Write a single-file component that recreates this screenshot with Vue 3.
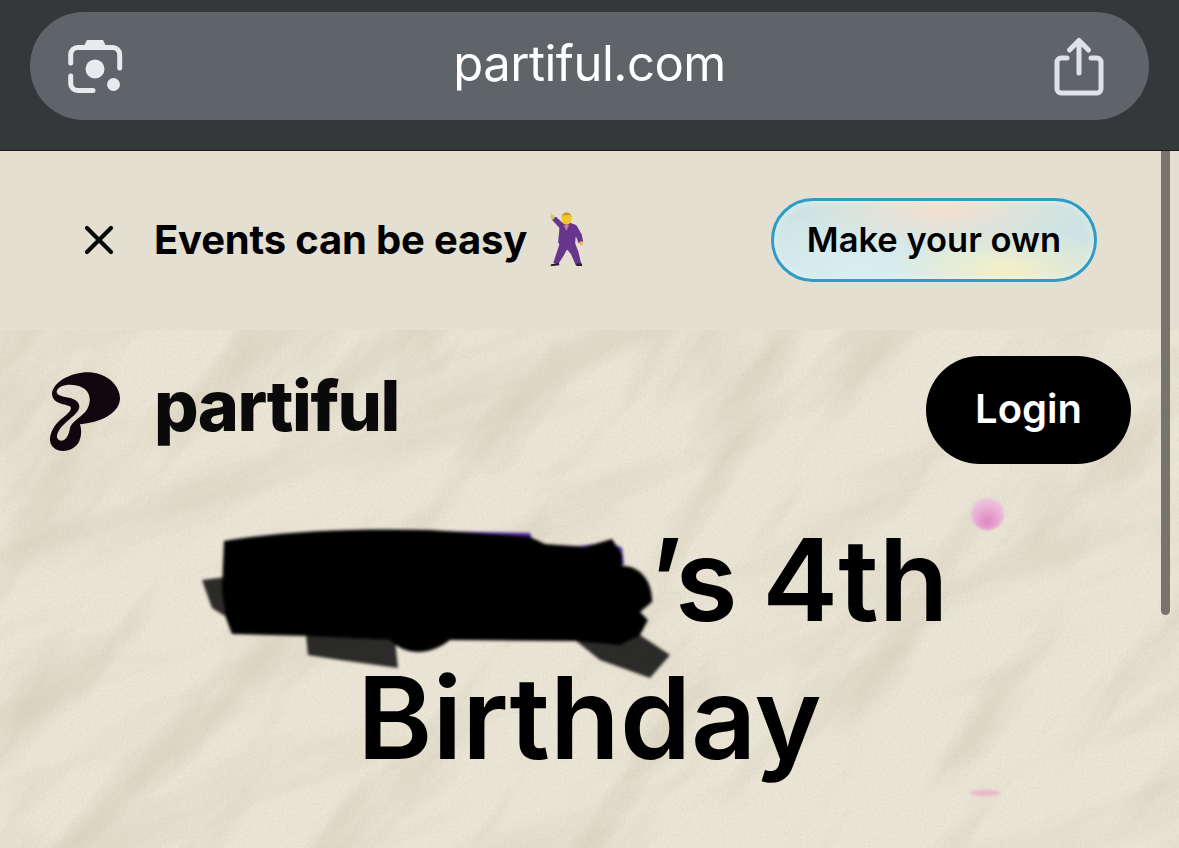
<template>
  <div class="page">
    <header class="browser-bar">
      <div class="url-pill">
        <svg class="lens" viewBox="65 35 60 60" width="60" height="60">
          <path d="M83 48l4-8h16l4 8z" fill="#e8eaed" />
          <path d="M70.700 63V54.500a7 7 0 0 1 7-7h35a7 7 0 0 1 7 7V68" fill="none" stroke="#e8eaed" stroke-width="5" stroke-linecap="round" />
          <path d="M70.700 76v7.500a7 7 0 0 0 7 7H93" fill="none" stroke="#e8eaed" stroke-width="5" stroke-linecap="round" />
          <circle cx="95" cy="69" r="9.500" fill="#e8eaed" />
          <circle cx="113.500" cy="84.500" r="6.500" fill="#e8eaed" />
        </svg>
        <span class="url">partiful.com</span>
        <svg class="share" viewBox="1050 35 60 65" width="60" height="65">
          <path d="M1067 58h-6a4 4 0 0 0-4 4v27a4 4 0 0 0 4 4h36a4 4 0 0 0 4-4V62a4 4 0 0 0-4-4h-6" fill="none" stroke="#dfe2e6" stroke-width="5" stroke-linecap="round" />
          <path d="M1079 73V42M1069.500 50l9.500-9.500 9.500 9.500" fill="none" stroke="#dfe2e6" stroke-width="5" stroke-linecap="round" stroke-linejoin="round" />
        </svg>
      </div>
    </header>

    <div class="content">
      <section class="banner">
        <div class="banner-left">
          <svg class="close" viewBox="0 0 30 30" width="30" height="30">
            <path d="M3 3l24 24M27 3L3 27" stroke="#0a0a0a" stroke-width="4.200" stroke-linecap="round" />
          </svg>
          <span class="banner-text">Events can be easy</span>
          <svg class="dancer" viewBox="0 0 165 204" width="55" height="68">
            <path d="M42 44L64 68 60 112 64 118 56 142 46 172 56 176 72 150 84 128 98 146 112 178 124 176 116 142 106 116 108 84 116 100 120 112 130 110 126 90 110 62 94 56 72 58 50 38z" fill="#67368c" stroke="#67368c" stroke-width="5" stroke-linejoin="round" />
            <path d="M74 60l8 18 8-18z" fill="#c97a9a" />
            <path d="M36 178l24-4 1 7-26 3zM112 176l16-1 2 8-18 0z" fill="#2a2030" />
            <path d="M34 24l3 8-3 1 4 12 8-3-2-12-5 0-2-6z" fill="#e8bd55" />
            <ellipse cx="83" cy="41" rx="15" ry="18" fill="#f1c52e" />
            <path d="M68 38c0-21 30-21 30 0l-4-7H72z" fill="#c99a1c" />
            <path d="M121 110l11-1 0 10-9 2z" fill="#e8bd55" />
          </svg>
        </div>
        <button class="make-own">Make your own</button>
      </section>

      <main class="paper">
        <svg class="texture" width="1179" height="518">
          <defs>
            <filter id="creases" x="0" y="0" width="100%" height="100%">
              <feTurbulence type="fractalNoise" baseFrequency="0.004 0.016" numOctaves="5" seed="37" />
              <feColorMatrix values="0 0 0 0 0.64  0 0 0 0 0.57  0 0 0 0 0.45  2.200 0 0 0 -1.120" />
            </filter>
            <filter id="creases-flat" x="0" y="0" width="100%" height="100%">
              <feTurbulence type="fractalNoise" baseFrequency="0.003 0.014" numOctaves="5" seed="8" />
              <feColorMatrix values="0 0 0 0 0.64  0 0 0 0 0.57  0 0 0 0 0.45  2 0 0 0 -1.020" />
            </filter>
            <filter id="grain" x="0" y="0" width="100%" height="100%">
              <feTurbulence type="fractalNoise" baseFrequency="0.45" numOctaves="2" seed="4" />
              <feColorMatrix values="0 0 0 0 0.55  0 0 0 0 0.5  0 0 0 0 0.4  0.8 0 0 0 -0.280" />
            </filter>
          </defs>
          <rect x="-400" y="-500" width="2000" height="1500" filter="url(#creases)" opacity="0.7" transform="rotate(-52 590 260)" />
          <rect x="-400" y="-500" width="2000" height="1500" filter="url(#creases-flat)" opacity="0.6" transform="rotate(-22 590 260)" />
          <rect width="1179" height="518" filter="url(#grain)" opacity="0.5" />
        </svg>

        <nav class="nav">
          <div class="brand">
            <svg class="logo" viewBox="0 0 270 285" width="90" height="95">
              <path fill-rule="evenodd" fill="#12060f" d="M36 85C40 50 95 20 150 22C205 26 240 65 240 100C240 140 190 172 120 178C125 195 125 210 118 228C105 258 60 268 38 245C20 225 35 190 55 170C80 148 96 138 92 126C80 116 36 120 36 85ZM50 80C54 60 95 52 128 68C155 82 155 118 135 142C118 160 98 168 90 188C87 212 74 232 58 226C42 218 54 192 80 170C110 146 128 130 112 110C96 92 52 100 50 80Z" />
            </svg>
            <span class="wordmark">partiful</span>
          </div>
          <button class="login">Login</button>
        </nav>

        <section class="hero">
          <h1 class="title"><span class="name-gap"></span>’s 4th<br />Birthday</h1>
        </section>

        <!-- scribble over the name, sits on top of the heading -->
        <svg class="scribble" viewBox="195 520 485 170" width="485" height="170">
          <path d="M430 531L530 533 534 545 580 546 610 542 622 548 624 565H430z" fill="#4a2396" />
          <path fill="#111" opacity="0.88" d="M202 580L226 577 240 625 228 618 212 608zM306 635L395 640 398 668 340 660 308 655zM575 640L625 625 670 655 650 678 600 660z" />
          <path fill="#000" d="M224 541C280 531 360 528 430 530L530 537 545 544 585 547 612 539 622 555 622 566C640 565 653 582 652 602L640 612 648 620 640 635 620 645 575 641 450 640C430 656 405 656 390 640L310 636 232 634 226 618 222 590z" />
        </svg>

        <i class="petal petal-round"></i>
        <i class="petal petal-flat"></i>
      </main>
    </div>

    <div class="scrollbar"></div>
  </div>
</template>

<script setup>
</script>

<style>
html, body {
  margin: 0;
  overflow: hidden;
  background: #e8e3d3;
}
</style>

<style scoped>
.page {
  position: relative;
  width: 1179px;
  height: 848px;
  overflow: hidden;
  font-family: "Inter", "Liberation Sans", sans-serif;
  color: #000;
}

/* ---------- Browser bar ---------- */

.browser-bar {
  box-sizing: border-box;
  height: 151px;
  padding: 12px 30px 0;
  background: #34383b;
  border-bottom: 1px solid #1c1a17;
}

.url-pill {
  display: flex;
  align-items: center;
  justify-content: space-between;
  height: 108px;
  padding: 0 39px 0 35px;
  border-radius: 54px;
  background: #5f6468;
}

.url {
  margin: -6px 0 0 4px;
  font-family: "Inter", sans-serif;
  font-size: 49px;
  color: #fff;
  letter-spacing: -0.5px;
}

.lens {
  margin-top: -2px;
}

.share {
  margin-top: 3px;
}

/* ---------- Banner ---------- */

.banner {
  display: flex;
  align-items: center;
  justify-content: space-between;
  height: 179px;
  padding: 0 82px 0 84px;
  background: #e4dfd0;
}

.banner-left {
  display: flex;
  align-items: center;
}

.close {
  margin: -2px 40px 0 0;
}

.banner-text {
  margin-top: -2px;
  font-size: 40px;
  font-weight: 700;
  letter-spacing: -0.180px;
}

.dancer {
  margin: -3px 0 0 12px;
}

.make-own {
  box-sizing: border-box;
  width: 326px;
  height: 84px;
  margin-top: -2px;
  border: 3px solid #2f9cc8;
  border-radius: 42px;
  font-family: inherit;
  font-size: 34.500px;
  font-weight: 600;
  color: #000;
  box-shadow: inset 0 0 6px 1px rgba(255, 255, 255, .35);
  background:
    radial-gradient(ellipse 130px 45px at 52% 8%, #f4e0cf, transparent),
    radial-gradient(ellipse 120px 40px at 72% 88%, #f4f0c8, transparent),
    radial-gradient(ellipse 170px 55px at 28% 85%, #d8eef3, transparent),
    #cfe4e2;
}

/* ---------- Paper ---------- */

.paper {
  position: relative;
  height: 518px;
  background: #ebe6d7;
  overflow: hidden;
}

.texture {
  position: absolute;
  top: 0;
  left: 0;
}

.nav {
  position: relative;
  display: flex;
  align-items: center;
  justify-content: space-between;
  padding: 26px 48px 0 40px;
}

.brand {
  display: flex;
  align-items: center;
  gap: 24px;
}

.logo {
  display: block;
  margin-top: 5px;
  filter: blur(.4px);
}

.wordmark {
  margin-top: -8px;
  font-size: 70px;
  font-weight: 800;
  letter-spacing: -1.500px;
  line-height: 1;
  color: #0a0a0a;
}

.login {
  box-sizing: border-box;
  width: 205px;
  height: 108px;
  padding-bottom: 4px;
  border: 0;
  border-radius: 54px;
  background: #000;
  color: #fff;
  font-family: inherit;
  font-size: 40px;
  font-weight: 600;
}

.hero {
  position: relative;
  padding-top: 47px;
  text-align: center;
}

.title {
  margin: 0;
  font-size: 114px;
  font-weight: 600;
  line-height: 138px;
  word-spacing: -4px;
  color: #000;
}

.name-gap {
  display: inline-block;
  width: 419px;
}

.scribble {
  position: absolute;
  top: 190px;
  left: 195px;
  filter: blur(1.500px);
}

.petal {
  position: absolute;
  display: block;
  border-radius: 50%;
}

.petal-round {
  top: 168px;
  left: 971px;
  width: 33px;
  height: 32px;
  background: radial-gradient(circle at 50% 72%, #dd88bf, #ecb6d8 55%, #efd6e0);
  filter: blur(1px);
}

.petal-flat {
  top: 460px;
  left: 970px;
  width: 30px;
  height: 6px;
  background: #e9b6c8;
  filter: blur(1.500px);
}

/* ---------- Scrollbar ---------- */

.scrollbar {
  position: absolute;
  top: 151px;
  left: 1161px;
  width: 9px;
  height: 464px;
  border-radius: 0 0 5px 5px;
  background: #77756b;
}
</style>
